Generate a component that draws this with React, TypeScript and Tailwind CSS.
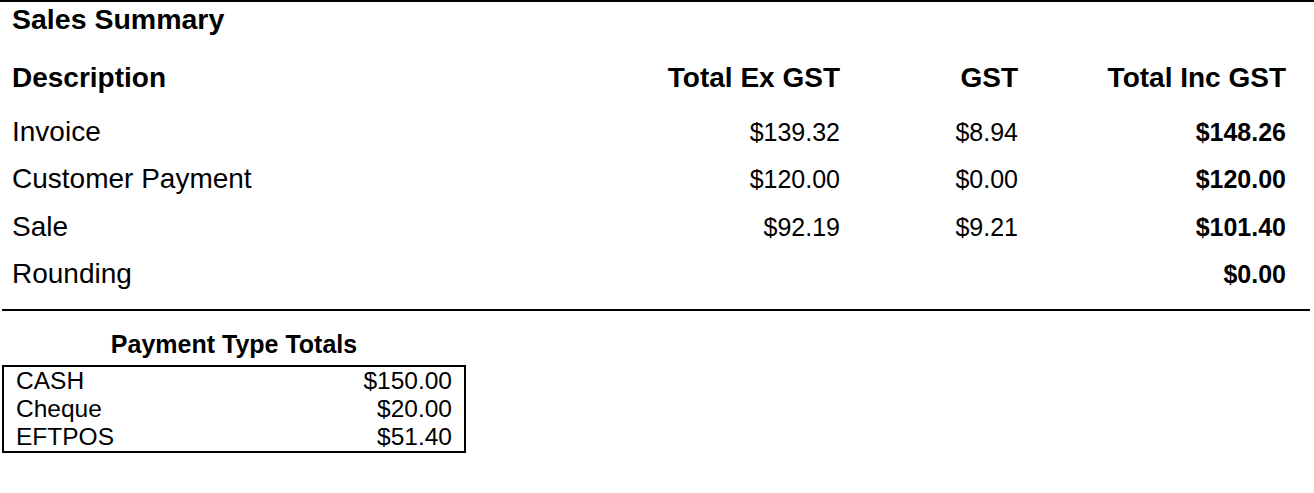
type Row = { label: string; ex?: string; gst?: string; total: string };

const rows: Row[] = [
  { label: 'Invoice', ex: '$139.32', gst: '$8.94', total: '$148.26' },
  { label: 'Customer Payment', ex: '$120.00', gst: '$0.00', total: '$120.00' },
  { label: 'Sale', ex: '$92.19', gst: '$9.21', total: '$101.40' },
  { label: 'Rounding', total: '$0.00' },
];

const payments = [
  { type: 'CASH', amount: '$150.00' },
  { type: 'Cheque', amount: '$20.00' },
  { type: 'EFTPOS', amount: '$51.40' },
];

export default function App() {
  return (
    <div
      className="min-h-screen w-full bg-white text-black"
      style={{ fontFamily: '"Liberation Sans", Arial, sans-serif' }}
    >
      <div className="border-t-2 border-black">
        <h1 className="pl-3 pt-px text-[28.5px] font-bold leading-[32px]">Sales Summary</h1>

        {/* header */}
        <div className="mt-[19px] flex h-[54px] items-baseline pl-3 pr-[28px] text-[28px] font-bold leading-[47px]">
          <div className="flex-1">Description</div>
          <div className="w-[200px] text-right">Total Ex GST</div>
          <div className="w-[178px] text-right">GST</div>
          <div className="w-[268px] text-right">Total Inc GST</div>
        </div>

        {rows.map((r) => (
          <div key={r.label} className="flex h-[47.4px] items-baseline pl-3 pr-[28px] leading-[47px]">
            <div className="flex-1 text-[28px]">{r.label}</div>
            <div className="w-[200px] text-right text-[25px]">{r.ex ?? ''}</div>
            <div className="w-[178px] text-right text-[25px]">{r.gst ?? ''}</div>
            <div className="w-[268px] text-right text-[25px] font-bold">{r.total}</div>
          </div>
        ))}

        <div className="ml-[2px] mr-[4px] mt-[11.4px] h-[2px] bg-black" />

        {/* payment totals */}
        <div className="ml-[2px] w-[464px] pt-[19px]">
          <div className="text-center text-[25px] font-bold leading-[28px]">Payment Type Totals</div>
          <div className="mt-[7px] border-2 border-black px-3 text-[24.5px] leading-[28px]">
            {payments.map((p) => (
              <div key={p.type} className="flex justify-between">
                <span>{p.type}</span>
                <span>{p.amount}</span>
              </div>
            ))}
          </div>
        </div>
      </div>
    </div>
  );
}
